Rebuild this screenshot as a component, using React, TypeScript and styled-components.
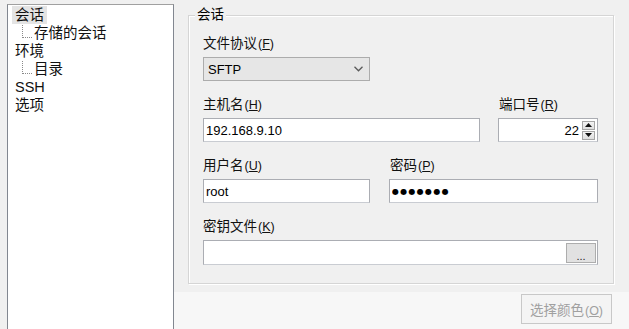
import React from 'react'
import styled, { createGlobalStyle } from 'styled-components'

const GlobalStyle = createGlobalStyle`
  html, body {
    margin: 0;
    padding: 0;
    background: #f0f0f0;
    overflow: hidden;
  }
  body {
    font-family: "Liberation Sans", "Noto Sans CJK SC", sans-serif;
    color: #000;
  }
`

type TreeItem = { label: string; depth: number; selected?: boolean }

const treeItems: TreeItem[] = [
  { label: '会话', depth: 0, selected: true },
  { label: '存储的会话', depth: 1 },
  { label: '环境', depth: 0 },
  { label: '目录', depth: 1 },
  { label: 'SSH', depth: 0 },
  { label: '选项', depth: 0 },
]

function Caption({ text, hotkey }: { text: string; hotkey: string }) {
  return (
    <>
      {text}
      <Accel>
        (<u>{hotkey}</u>)
      </Accel>
    </>
  )
}

export default function App() {
  return (
    <Window>
      <GlobalStyle />
      <Sidebar>
        <Tree>
          {treeItems.map((item) => (
            <TreeRow key={item.label} $depth={item.depth}>
              <TreeLabel $selected={!!item.selected}>{item.label}</TreeLabel>
            </TreeRow>
          ))}
        </Tree>
      </Sidebar>
      <Main>
        <Panel>
          <GroupBox>
            <GroupTitle>会话</GroupTitle>
            <Form>
              <Row>
                <Field $width={167}>
                  <Label><Caption text="文件协议" hotkey="F" /></Label>
                  <ComboBox>
                    <span>SFTP</span>
                    <svg width="9" height="6" viewBox="0 0 9 6">
                      <path d="M0.5 0.8 L4.5 4.8 L8.5 0.8" fill="none" stroke="#5a5a5a" strokeWidth="1.3" />
                    </svg>
                  </ComboBox>
                </Field>
              </Row>
              <Row $gap={18}>
                <Field $width={277}>
                  <Label><Caption text="主机名" hotkey="H" /></Label>
                  <TextBox readOnly defaultValue="192.168.9.10" />
                </Field>
                <Field $width={100}>
                  <Label $indent={1}><Caption text="端口号" hotkey="R" /></Label>
                  <SpinBox>
                    <SpinValue>22</SpinValue>
                    <SpinButtons>
                      <SpinButton>
                        <svg width="7" height="4" viewBox="0 0 7 4"><path d="M0 4 L3.5 0 L7 4 Z" fill="#111" /></svg>
                      </SpinButton>
                      <SpinButton>
                        <svg width="7" height="4" viewBox="0 0 7 4"><path d="M0 0 L3.5 4 L7 0 Z" fill="#111" /></svg>
                      </SpinButton>
                    </SpinButtons>
                  </SpinBox>
                </Field>
              </Row>
              <Row $gap={19}>
                <Field $width={167}>
                  <Label><Caption text="用户名" hotkey="U" /></Label>
                  <TextBox readOnly defaultValue="root" />
                </Field>
                <Field $width={209}>
                  <Label $indent={1}><Caption text="密码" hotkey="P" /></Label>
                  <TextBox readOnly $masked defaultValue="●●●●●●●" />
                </Field>
              </Row>
              <Row>
                <Field $width={395}>
                  <Label><Caption text="密钥文件" hotkey="K" /></Label>
                  <BrowseBox>
                    <BrowseInput readOnly defaultValue="" />
                    <EllipsisButton>...</EllipsisButton>
                  </BrowseBox>
                </Field>
              </Row>
            </Form>
          </GroupBox>
        </Panel>
        <Footer>
          <DialogButton disabled>
            选择颜色<Accel $muted>(<u>O</u>)</Accel>
          </DialogButton>
        </Footer>
      </Main>
    </Window>
  )
}

const Window = styled.div`
  width: 629px;
  height: 329px;
  display: flex;
  overflow: hidden;
  background: #f0f0f0;
`

const Sidebar = styled.div`
  padding: 4px 0 0 7px;
`

const Tree = styled.ul`
  box-sizing: border-box;
  width: 167px;
  height: 340px;
  margin: 0;
  padding: 1px 0 0 4px;
  list-style: none;
  background: #fff;
  border: 1px solid #828790;
  border-top-color: #a0a0a0;
`

const TreeRow = styled.li<{ $depth: number }>`
  position: relative;
  height: 18px;
  line-height: 18px;
  font-size: 14.5px;
  color: #111;
  padding-left: ${(p) => p.$depth * 19}px;

  &::before {
    content: '';
    display: ${(p) => (p.$depth > 0 ? 'block' : 'none')};
    position: absolute;
    left: 10px;
    top: 1px;
    width: 9px;
    height: 12px;
    border-left: 1px dotted #8a8a8a;
    border-bottom: 1px dotted #8a8a8a;
  }
`

const TreeLabel = styled.span<{ $selected: boolean }>`
  display: inline-block;
  padding: 0 3px;
  background: ${(p) => (p.$selected ? '#e4e4e4' : 'transparent')};
`

const Main = styled.div`
  flex: 1;
  display: flex;
  flex-direction: column;
`

const Panel = styled.div`
  height: 292px;
  box-sizing: border-box;
  padding: 7px 15px 0 14px;
  background: #f0f0f0;
`

const GroupBox = styled.fieldset`
  margin: 0;
  min-width: 0;
  padding: 12px 14px 18px;
  border: 1px solid #d5d5d5;
  box-shadow: inset 1px 1px 0 #fff, 1px 1px 0 #fff;
`

const GroupTitle = styled.legend`
  margin-left: -8px;
  padding: 0 2px;
  font-size: 13.5px;
  line-height: 16px;
  background: #f0f0f0;
`

const Form = styled.div`
  display: flex;
  flex-direction: column;
  gap: 15px;
`

const Row = styled.div<{ $gap?: number }>`
  display: flex;
  gap: ${(p) => p.$gap ?? 0}px;
`

const Field = styled.div<{ $width: number }>`
  width: ${(p) => p.$width}px;
  display: flex;
  flex-direction: column;
  gap: 4px;
`

const Label = styled.div<{ $indent?: number }>`
  height: 18px;
  line-height: 18px;
  font-size: 13.5px;
  color: #111;
  padding-left: ${(p) => p.$indent ?? 0}px;
  white-space: nowrap;
`

const Accel = styled.span<{ $muted?: boolean }>`
  font-family: "Liberation Sans", sans-serif;
  font-size: 12.5px;
  margin-left: 1px;
  color: ${(p) => (p.$muted ? '#a0a0a0' : 'inherit')};
`

const ComboBox = styled.div`
  box-sizing: border-box;
  height: 24px;
  display: flex;
  align-items: center;
  justify-content: space-between;
  padding: 0 6px 0 4px;
  font-size: 13px;
  background: #e6e6e6;
  border: 1px solid #acacac;
`

const TextBox = styled.input<{ $masked?: boolean }>`
  box-sizing: border-box;
  width: 100%;
  height: 24px;
  margin: 0;
  padding: 0 2px;
  font-family: ${(p) => (p.$masked ? '"DejaVu Sans", sans-serif' : '"Liberation Sans", sans-serif')};
  font-size: ${(p) => (p.$masked ? '8px' : '13px')};
  letter-spacing: ${(p) => (p.$masked ? '1.3px' : 'normal')};
  color: #000;
  background: #fff;
  border: 1px solid #abadb3;
  border-bottom-color: #c9ccd2;
  outline: none;
`

const SpinBox = styled.div`
  box-sizing: border-box;
  height: 24px;
  display: flex;
  align-items: center;
  padding: 0 2px 0 0;
  background: #fff;
  border: 1px solid #abadb3;
  border-bottom-color: #c9ccd2;
`

const SpinValue = styled.span`
  flex: 1;
  text-align: right;
  padding-right: 3px;
  font-size: 13px;
`

const SpinButtons = styled.div`
  display: flex;
  flex-direction: column;
  gap: 1px;
`

const SpinButton = styled.div`
  box-sizing: border-box;
  width: 13px;
  height: 9px;
  display: flex;
  align-items: center;
  justify-content: center;
  background: linear-gradient(#f4f4f4, #dedede);
  border: 1px solid #a6a6a6;
`

const BrowseBox = styled.div`
  box-sizing: border-box;
  height: 25px;
  display: flex;
  align-items: center;
  padding: 0 1px 0 0;
  background: #fff;
  border: 1px solid #abadb3;
  border-bottom-color: #c9ccd2;
`

const BrowseInput = styled.input`
  flex: 1;
  min-width: 0;
  height: 100%;
  margin: 0;
  padding: 0 2px;
  border: none;
  outline: none;
  background: transparent;
  font-family: "Liberation Sans", sans-serif;
  font-size: 13px;
`

const EllipsisButton = styled.button`
  box-sizing: border-box;
  width: 30px;
  height: 20px;
  margin: 0;
  padding: 6px 0 0;
  font-family: "Liberation Sans", sans-serif;
  font-size: 11px;
  line-height: 10px;
  color: #222;
  background: #e1e1e1;
  border: 1px solid #adadad;
`

const Footer = styled.div`
  flex: 1;
  display: flex;
  justify-content: flex-end;
  align-items: flex-start;
  padding: 2px 17px 0 0;
  background: #f7f7f7;
`

const DialogButton = styled.button`
  box-sizing: border-box;
  width: 91px;
  height: 30px;
  margin: 0;
  padding: 0;
  font-family: "Liberation Sans", "Noto Sans CJK SC", sans-serif;
  font-size: 13.5px;
  color: #a0a0a0;
  background: #f4f4f4;
  border: 1px solid #c8c8c8;
`
